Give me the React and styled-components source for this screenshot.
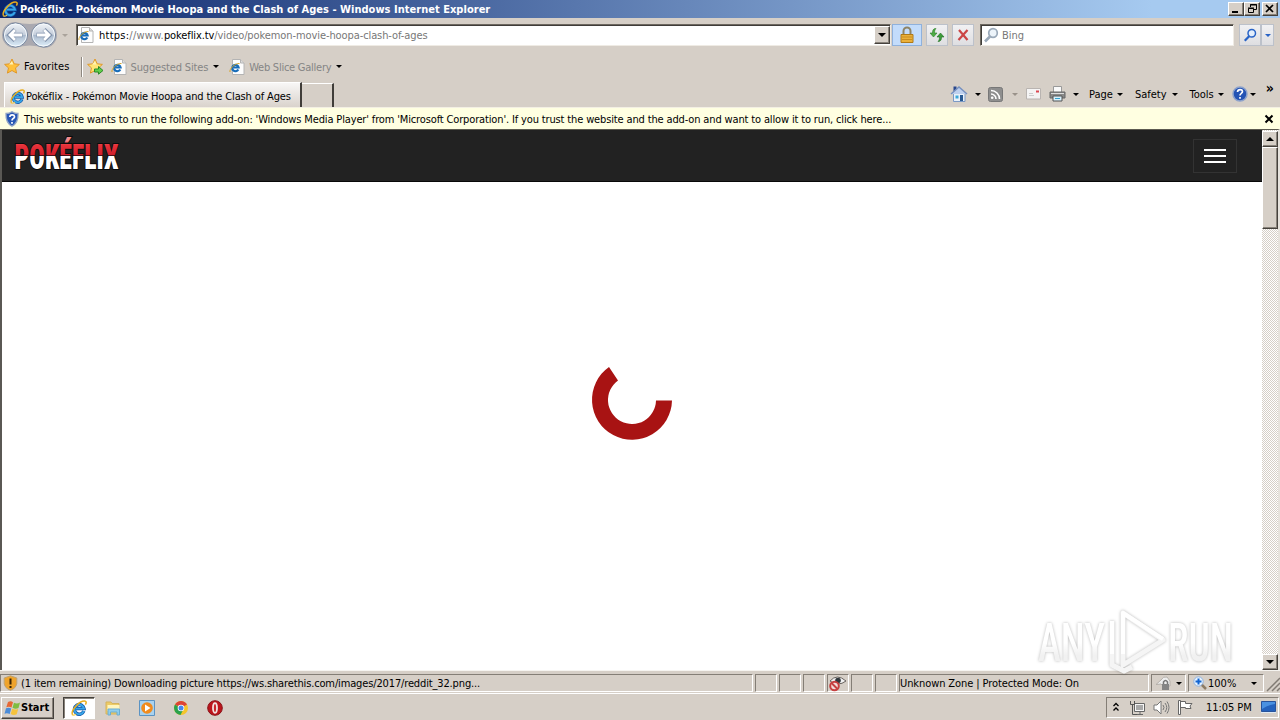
// Global
import { Fragment } from 'react'
import styled, { createGlobalStyle, css } from 'styled-components'

const GlobalStyle = createGlobalStyle`
  * {
    box-sizing: border-box;
  }

  body {
    margin: 0;
    overflow: hidden;
    background: #d6cfc7;
    font-family: 'DejaVu Sans Condensed', 'DejaVu Sans', sans-serif;
    font-stretch: condensed;
    font-size: 11px;
    color: #000;
  }

  svg {
    display: block;
    flex: none;
    overflow: visible;
  }
`

// Classic borders
const sunken = css`
  border: 1px solid;
  border-color: #847e76 #fff #fff #847e76;
`

const raised = css`
  border: 1px solid;
  border-color: #fff #45413c #45413c #fff;
  box-shadow: inset -1px -1px 0 #88827a;
`

const Window = styled.div`
  width: 1280px;
  height: 720px;
  display: flex;
  flex-direction: column;
`

const Text = styled.span`
  flex: none;
  white-space: pre;
  line-height: 14px;
  padding-top: ${p => (p.$flat ? 0 : 2)}px;
  margin-left: ${p => p.$left || 0}px;
  letter-spacing: ${p => p.$spacing || 0}px;
  color: ${p => p.$color || '#000'};
  font-weight: ${p => (p.$bold ? 700 : 400)};
`

const Gap = styled.div`
  flex: ${p => (p.$w ? `0 0 ${p.$w}px` : '1')};
`

const Arrow = styled.i`
  flex: none;
  width: 0;
  height: 0;
  border: 3px solid transparent;
  border-width: 3px 3px 0;
  border-top-color: ${p => p.$color || '#000'};
  margin-left: ${p => p.$left || 0}px;
`

// Title bar
const TitleBar = styled.div`
  height: 18px;
  flex: none;
  display: flex;
  align-items: center;
  padding: 0 2px;
  background: linear-gradient(90deg, #0a246a, #a6caf0 90%);
`

const WindowButton = styled.div`
  width: 16px;
  height: 14px;
  margin-left: ${p => p.$left || 0}px;
  background: #d6cfc7;
  ${raised}
`

// Address row
const AddressRow = styled.div`
  height: 34px;
  flex: none;
  display: flex;
  align-items: center;
  padding-left: 2px;
`

const Field = styled.div`
  width: ${p => p.$w}px;
  height: 22px;
  flex: none;
  display: flex;
  align-items: center;
  background: #fff;
  border: 1px solid;
  border-color: #6d6860 #efebe4 #efebe4 #6d6860;
  box-shadow: inset 1px 1px 0 #403d39;
  margin-left: ${p => p.$left || 0}px;
`

const DropButton = styled.div`
  width: 16px;
  height: 18px;
  display: flex;
  align-items: center;
  justify-content: center;
  background: #d6cfc7;
  ${raised}

  i {
    border-width: 4px 4px 0;
  }
`

const ToolButton = styled.div`
  width: ${p => p.$w || 22}px;
  height: 22px;
  flex: none;
  display: flex;
  align-items: center;
  justify-content: center;
  margin-left: ${p => p.$left || 0}px;
  background: ${p => (p.$active ? '#c3dcfb' : 'linear-gradient(#f1f1f3, #dedee1)')};
  border: 1px solid ${p => (p.$active ? '#8fb1dc' : '#bcc1ca')};
`

// Favorites row
const FavoritesRow = styled.div`
  height: 29px;
  flex: none;
  display: flex;
  align-items: center;
  padding-left: 4px;
`

const Divider = styled.div`
  width: 2px;
  height: 20px;
  margin-left: ${p => p.$left}px;
  background: #8d877f;
  border-right: 1px solid #fff;
`

// Tabs and command bar
const TabRow = styled.div`
  height: 27px;
  flex: none;
  display: flex;
  align-items: flex-end;
  padding-left: 4px;
  border-bottom: 1px solid #f3efe4;
`

const Tab = styled.div`
  width: 298px;
  height: 25px;
  display: flex;
  align-items: center;
  padding: 2px 0 0 5px;
  background: linear-gradient(#f8f7f6, #d9d3cc);
  border: 1px solid #fff;
  border-bottom: 0;
  border-right: 2px solid #403d39;
`

const NewTab = styled.div`
  width: 32px;
  height: 24px;
  border-top: 1px solid #fff;
  border-right: 2px solid #403d39;
`

const CommandBar = styled.div`
  flex: 1;
  height: 26px;
  display: flex;
  align-items: center;
  padding-left: 616px;
`

const Overflow = styled(Text)`
  align-self: flex-start;
  font-size: 14px;
  font-weight: 700;
  line-height: 10px;
`

const InfoBar = styled.div`
  height: 21px;
  flex: none;
  display: flex;
  align-items: center;
  padding: 0 6px 0 4px;
  background: #ffffe1;
`

// Web page
const Viewport = styled.div`
  height: 541px;
  flex: none;
  display: flex;
  border-top: 1px solid #5c5a50;
  border-left: 2px solid #5a5854;
  border-right: 2px solid #e6e2dc;
`

const Page = styled.div`
  width: 1260px;
  display: flex;
  flex-direction: column;
  background: #fff;
`

const Navbar = styled.div`
  height: 52px;
  flex: none;
  display: flex;
  align-items: center;
  justify-content: space-between;
  padding: 0 25px 0 10px;
  background: #222;
  border-bottom: 1px solid #080808;
`

const MenuButton = styled.div`
  width: 44px;
  height: 34px;
  display: flex;
  flex-direction: column;
  align-items: center;
  justify-content: center;
  gap: 4px;
  border: 1px solid #333;

  span {
    width: 22px;
    height: 2px;
    background: #fff;
  }
`

const Loading = styled.div`
  flex: 1;
  display: flex;
  align-items: center;
  justify-content: center;
  padding-bottom: 52px;
`

const Scrollbar = styled.div`
  width: 16px;
  display: flex;
  flex-direction: column;
  padding-top: 1px;
  background: repeating-conic-gradient(#fff 0 25%, #d6cfc7 0 50%) 0 0 / 2px 2px;
`

const ScrollButton = styled.div`
  height: 16px;
  display: flex;
  align-items: center;
  justify-content: center;
  background: #d6cfc7;
  ${raised}

  i {
    border-width: 4px 4px 0;
    transform: ${p => (p.$up ? 'rotate(180deg)' : 'none')};
  }
`

const Thumb = styled.div`
  height: 82px;
  background: #d6cfc7;
  ${raised}
`

const Watermark = styled.svg`
  position: absolute;
  left: 1030px;
  top: 604px;
  filter: drop-shadow(0 0 1.5px rgba(0, 0, 0, 0.28));
`

// Status bar
const StatusBar = styled.div`
  height: 23px;
  flex: none;
  display: flex;
  align-items: center;
  gap: 2px;
  padding-top: 2px;
  border-top: 1px solid #f6f4f0;
`

const Panel = styled.div`
  width: ${p => p.$w || 22}px;
  height: 18px;
  flex: none;
  display: flex;
  align-items: center;
  ${sunken}
`

// Taskbar
const Taskbar = styled.div`
  height: 27px;
  flex: none;
  display: flex;
  align-items: center;
  padding: 1px 1px 0 1px;
  border-top: 1px solid #fff;
`

const StartButton = styled.div`
  width: 53px;
  height: 22px;
  display: flex;
  align-items: center;
  padding-left: 2px;
  ${raised}
`

const ActiveTask = styled.div`
  width: 32px;
  height: 22px;
  display: flex;
  align-items: center;
  justify-content: center;
  margin-left: 9px;
  background: #fff;
  border: 1px solid;
  border-color: #45413c #fff #fff #45413c;
  box-shadow: inset 1px 1px 0 #88827a;
`

const Tray = styled.div`
  width: 173px;
  height: 21px;
  display: flex;
  align-items: center;
  padding-left: 5px;
  ${sunken}
`

// Icons
function IeIcon({ size = 16 }) {
  return (
    <svg width={size} height={size} viewBox="0 0 16 16" fill="none">
      <path d="M12.800 11A4.800 4.800 0 1 1 13 8.600H5" stroke="#1558a8" strokeWidth="3.400" />
      <path d="M12.800 11A4.800 4.800 0 1 1 13 8.600H5" stroke="#37a5e8" strokeWidth="1.900" />
      <path d="M1.500 14.800C-.8 11 8.500.2 14.300 1.200c1.300.3 1 2 .1 3.500" stroke="#e8ad1d" strokeWidth="1.500" />
      <path d="M1.500 14.800c.8.800 2.400.1 3.600-.6" stroke="#f5cd45" strokeWidth="1.200" />
    </svg>
  )
}

function PageIcon() {
  return (
    <svg width="16" height="16" viewBox="0 0 16 16">
      <path d="M3.500.5h8l3.500 3.500v11.500H3.500z" fill="#fdfdfd" stroke="#b4b4b4" />
      <path d="M11.500.5V4H15" fill="#ddd" stroke="#b4b4b4" />
      <path d="M9.300 10.500a3.200 3.200 0 1 1 .3-2H4.500" fill="none" stroke="#176cb9" strokeWidth="2.200" />
      <path d="M1 13C0 10.500 5.500 4 10.500 4.500" fill="none" stroke="#d8a528" />
    </svg>
  )
}

function NavButtons() {
  return (
    <svg width="56" height="28" viewBox="0 0 56 28">
      <defs>
        <linearGradient id="orb" x1="0" y1="0" x2="0" y2="1">
          <stop offset="0" stopColor="#f2f5f9" />
          <stop offset=".48" stopColor="#c5cedb" />
          <stop offset=".5" stopColor="#a8b7cb" />
          <stop offset="1" stopColor="#e0f1fc" />
        </linearGradient>
      </defs>
      <path d="M13 1q15 4 29 0a13 13 0 0 1 0 26q-14-5-29 0a13 13 0 0 1 0-26z" fill="#aaa9b0" />
      {[13.5, 41.5].map((cx, i) => (
        <g key={i}>
          <circle cx={cx} cy="14" r="12" fill="url(#orb)" stroke="#76869e" />
          <circle cx={cx} cy="14" r="11" fill="none" stroke="#f6fafd" />
        </g>
      ))}
      <path d="M20.500 14h-13M13 8.500 7.500 14l5.500 5.500M34.500 14h13M42 8.500l5.500 5.500-5.500 5.500" fill="none" stroke="#8293ac" strokeWidth="4.400" />
      <path d="M20 14H8M13 9l-5 5 5 5M35 14h12M42 9l5 5-5 5" fill="none" stroke="#fff" strokeWidth="2.800" />
    </svg>
  )
}

function StarIcon({ add }) {
  return (
    <svg width="17" height="17" viewBox="0 0 17 17">
      <path d="m8 1 2.200 4.800 5.200.6-3.900 3.500 1.100 5.200L8 12.500l-4.600 2.600 1.100-5.200L.6 6.400l5.200-.6z" fill={add ? '#ffe675' : '#ffc13b'} stroke="#e0982a" />
      <path d="m8 3 1.300 3.500H5z" fill="#fff3b5" />
      {add && <path d="M7.500 11h4V8.500l4.500 4-4.500 3.700V14h-4z" fill="#62cf4a" stroke="#2b8a28" />}
    </svg>
  )
}

function LockIcon() {
  return (
    <svg width="16" height="18" viewBox="0 0 16 18">
      <path d="M4.500 9V5a3.500 3.500 0 0 1 7 0v4" fill="none" stroke="#8e8466" strokeWidth="2" />
      <path d="M2 8.500h12v8H2z" fill="#eab03a" stroke="#b07a18" />
      <path d="M3 11h10M3 13.500h10" stroke="#c98d22" />
    </svg>
  )
}

function RefreshIcon() {
  return (
    <svg width="16" height="16" viewBox="0 0 16 16">
      <path d="M7 1.500c-3 0-3.500 2-3.500 4.500H1l3.500 4L8 6H5.500c0-2 .5-3.500 1.500-4.500z" fill="#4fac45" stroke="#2c7d2c" strokeWidth=".6" />
      <path d="M9 14.500c3 0 3.500-2 3.500-4.500H15l-3.500-4L8 10h2.500c0 2-.5 3.500-1.500 4.500z" fill="#3d9b3a" stroke="#206e24" strokeWidth=".6" />
    </svg>
  )
}

function StopIcon() {
  return (
    <svg width="14" height="14" viewBox="0 0 14 14">
      <path d="m3 2 8.500 10M11.500 2 2.500 12" stroke="#cb4545" strokeWidth="2.200" />
    </svg>
  )
}

function SearchIcon({ color = '#2863c6', glass = '#e3eefc', size = 16 }) {
  return (
    <svg width={size} height={size} viewBox="0 0 16 16">
      <path d="M7 9.500 2 14.500" stroke={color} strokeWidth="2.600" />
      <circle cx="10" cy="6" r="4.300" fill={glass} stroke={color} strokeWidth="1.700" />
    </svg>
  )
}

function ShieldIcon() {
  return (
    <svg width="16" height="16" viewBox="0 0 16 16">
      <path d="M8 .7c2 1.300 4 1.800 6 1.800.3 6-1 10-6 12.800C3 12.500 1.700 8.500 2 2.500 4 2.500 6 2 8 .7z" fill="#2858b5" stroke="#93a6c6" strokeWidth="1.300" />
      <path d="M5.800 6q.2-2.200 2.400-2.200c2.800 0 3 2.800 1 3.800Q8 8.300 8 9.500M8 11v1.700" fill="none" stroke="#fff" strokeWidth="1.700" />
    </svg>
  )
}

function HomeIcon() {
  return (
    <svg width="18" height="18" viewBox="0 0 18 18">
      <path d="M3.500 1.500h3v5h-3z" fill="#28478d" />
      <path d="M3.500 8h11.500v8.500H3.500z" fill="#e9f1fa" stroke="#7b99c5" />
      <path d="M1 9 9 2l8 7" fill="#bed0ee" stroke="#7690bf" strokeWidth="1.500" />
      <path d="M10 10h3v6h-3z" fill="#285993" />
      <path d="M5.500 10.500h3v3h-3z" fill="#3ca8d9" />
    </svg>
  )
}

function FeedIcon() {
  return (
    <svg width="15" height="15" viewBox="0 0 15 15">
      <rect x=".5" y=".5" width="14" height="14" rx="2" fill="#8e8e8e" stroke="#777" />
      <path d="M3 3.500a8.500 8.500 0 0 1 8.500 8.500M3 7a5 5 0 0 1 5 5" fill="none" stroke="#fff" strokeWidth="1.600" />
      <circle cx="4.200" cy="10.800" r="1.300" fill="#fff" />
    </svg>
  )
}

function MailIcon() {
  return (
    <svg width="15" height="12" viewBox="0 0 15 12">
      <path d="M.5.500h14v10.500H.5z" fill="#f5f4f4" stroke="#b9b4b1" />
      <path d="M10 2.500h3v2h-3z" fill="#db4651" />
      <path d="M3 5.500h4M3 7.500h5" stroke="#ccc" />
    </svg>
  )
}

function PrinterIcon() {
  return (
    <svg width="17" height="16" viewBox="0 0 17 16">
      <path d="M4.500.5h8V7h-8z" fill="#fafafa" stroke="#999" />
      <path d="M1 6h15v6H1z" fill="#888" stroke="#666" />
      <path d="M2 7.500h13" stroke="#ddd" />
      <path d="M4 10h9v5H4z" fill="#d8f0fb" stroke="#555" />
      <path d="M6 12.500h5" stroke="#36a0cc" />
    </svg>
  )
}

function HelpIcon() {
  return (
    <svg width="16" height="16" viewBox="0 0 16 16">
      <circle cx="8" cy="8" r="7" fill="#2453b4" stroke="#8da2cb" strokeWidth="1.500" />
      <path d="M5.500 6q.2-2.300 2.600-2.300c3 0 3 2.800 1 3.900Q8 8.300 8 9.500M8 11v1.800" fill="none" stroke="#fff" strokeWidth="1.700" />
    </svg>
  )
}

function Logo() {
  return (
    <svg width="112" height="51" viewBox="0 0 112 51">
      <defs>
        <linearGradient id="logo" gradientUnits="userSpaceOnUse" x1="0" y1="0" x2="0" y2="50">
          <stop offset=".2" stopColor="#f08a8c" />
          <stop offset=".3" stopColor="#e8323a" />
          <stop offset=".5" stopColor="#cf202c" />
          <stop offset=".5" stopColor="#4d1115" />
          <stop offset=".52" stopColor="#4d1115" />
          <stop offset=".52" stopColor="#fff" />
        </linearGradient>
      </defs>
      <text x="2.500" y="38.500" textLength="104" lengthAdjust="spacingAndGlyphs" fontFamily="Roboto, sans-serif" fontWeight="900" fontSize="35" fill="url(#logo)" stroke="#0b0b0b" strokeWidth="2" paintOrder="stroke">POKÉFLIX</text>
    </svg>
  )
}

function Spinner() {
  return (
    <svg width="80" height="80" viewBox="-40 -40 80 80">
      <path d="M40 .5A40 40 0 1 1-23-33l9 13.500A24 24 0 1 0 24 .5z" fill="#a81313" />
    </svg>
  )
}

function WarnIcon() {
  return (
    <svg width="15" height="16" viewBox="0 0 15 16">
      <path d="M7.500.8 13.800 3v5.500q-1 5-6.300 6.700Q2 13.500 1.200 8.500V3z" fill="#efa42b" stroke="#bca275" />
      <path d="M7.500 3.500v6M7.500 11v2" stroke="#3b2505" strokeWidth="2" />
    </svg>
  )
}

function PrivacyIcon() {
  return (
    <svg width="20" height="17" viewBox="0 0 20 17">
      <path d="M2 6q7-8 16 0-8 6-16 0z" fill="#f2f2f2" stroke="#68625e" />
      <circle cx="10" cy="5.500" r="2.800" fill="#30383d" />
      <circle cx="6.500" cy="11" r="4.300" fill="#f2dcda" stroke="#c64040" strokeWidth="2" />
      <path d="m3.500 8 6 6" stroke="#c64040" strokeWidth="2" />
    </svg>
  )
}

function ProtectIcon() {
  return (
    <svg width="17" height="16" viewBox="0 0 17 16">
      <path d="M1 9.500 6 5q2-4 6-3l3 4v5H8L6 9z" fill="#eee" stroke="#b5b0aa" />
      <path d="M8.500 9V7q2-3 4 0v2" fill="none" stroke="#777" strokeWidth="1.500" />
      <path d="M7 9h7v6H7z" fill="#858585" />
    </svg>
  )
}

function ZoomIcon() {
  return (
    <svg width="14" height="15" viewBox="0 0 14 15">
      <path d="m8 8 5 5" stroke="#8e7c65" strokeWidth="2.500" />
      <circle cx="5.500" cy="5.500" r="4.700" fill="#e5f2ff" stroke="#91b3df" />
      <path d="M5.500 2.500v6M2.500 5.500h6" stroke="#1264d1" strokeWidth="2" />
    </svg>
  )
}

function WindowsIcon() {
  return (
    <svg width="17" height="16" viewBox="0 0 17 16">
      <path d="M4 2q3-1.500 5 .3L7.500 7.500Q5 6 2.300 7.200z" fill="#e66835" />
      <path d="M10 2.700q3 1.500 6-.2L14.500 8q-3 1.500-6-.2z" fill="#7fbd42" />
      <path d="M2 8.200q3-1.200 5.200.3L5.700 14Q3 12.500.5 13.700z" fill="#4b8cd8" />
      <path d="M8.200 8.800q3 1.500 6 .2l-1.500 5.300q-3 1.500-6-.2z" fill="#f5c33c" />
    </svg>
  )
}

function FolderIcon() {
  return (
    <svg width="16" height="16" viewBox="0 0 16 16">
      <path d="M1 2h5l1 1.500h7V14H1z" fill="#edcb66" stroke="#d5b35c" />
      <path d="M2.500 5h12v6h-12z" fill="#fff5bd" />
      <path d="M3 9h11.500v6H12v-3H5.500v3H3z" fill="#8fcdec" stroke="#6cadd1" />
    </svg>
  )
}

function PlayerIcon() {
  return (
    <svg width="16" height="16" viewBox="0 0 16 16">
      <path d="M.5.500h15v15H.5z" fill="#a9d2ef" stroke="#5b93c3" />
      <circle cx="8" cy="8" r="5.800" fill="#f18b1d" />
      <path d="m6 4.500 5.500 3.500L6 11.500z" fill="#fff" />
    </svg>
  )
}

function ChromeIcon() {
  return (
    <svg width="14" height="14" viewBox="0 0 14 14">
      <circle cx="7" cy="7" r="7" fill="#f4c52c" />
      <path d="M7 7 1 3.500a7 7 0 0 1 12 0z" fill="#dc4437" />
      <path d="M1 3.500a7 7 0 0 0 5.500 10.500L9 9z" fill="#2ba24c" />
      <circle cx="7" cy="7" r="3.300" fill="#fff" />
      <circle cx="7" cy="7" r="2.500" fill="#4587ee" />
    </svg>
  )
}

function OperaIcon() {
  return (
    <svg width="16" height="16" viewBox="0 0 16 16">
      <circle cx="8" cy="8" r="7.300" fill="#bc151c" stroke="#8a1218" />
      <ellipse cx="8" cy="8" rx="2" ry="4.800" fill="#c9262b" stroke="#f3e4e2" strokeWidth="1.800" />
    </svg>
  )
}

function NetworkIcon() {
  return (
    <svg width="17" height="16" viewBox="0 0 17 16" stroke="#666" fill="#f6f6f6">
      <path d="M5.500 3.500h10v8h-10zM8 14.500h6M11 12v2" />
      <path d="M7 5h7v5H7z" fill="#a9a9a9" stroke="none" />
      <path d="M1.500 1v3.500h4V1M3.500 5v9.500H8" fill="none" stroke="#555" />
    </svg>
  )
}

function SpeakerIcon() {
  return (
    <svg width="17" height="15" viewBox="0 0 17 15" fill="none" stroke="#777">
      <path d="M1 5h3l4-4v13l-4-4H1z" fill="#fff" />
      <path d="M10 5q2 2.500 0 5M12 3q3.500 4.500 0 9M14 1.500q4 6 0 12" />
    </svg>
  )
}

function FlagIcon() {
  return (
    <svg width="17" height="15" viewBox="0 0 17 15" stroke="#666" fill="#fff">
      <path d="M1.500.5h2v14h-2zM3.500 1.500h5v2h6.500l-2 2.500 1 2.500H8.500v-1h-5z" />
    </svg>
  )
}

function DesktopIcon() {
  return (
    <svg width="15" height="13" viewBox="0 0 15 13">
      <path d="M.5.500h14v10H.5z" fill="#2462bd" stroke="#28539b" />
      <path d="M1 1h13v2Q7 4 1 8z" fill="#4a91e1" />
      <path d="M0 11.500h15" stroke="#dfe9f2" />
    </svg>
  )
}

const commands = [
  { name: 'Page', left: 10, arrow: 4 },
  { name: 'Safety', left: 12, arrow: 5 },
  { name: 'Tools', left: 12, arrow: 4 },
]

export default function App() {
  return (
    <Window>
      <GlobalStyle />

      <TitleBar>
        <IeIcon />
        <Text $left={2} $spacing={0.025} $color="#fff" $bold>Pokéflix - Pokémon Movie Hoopa and the Clash of Ages - Windows Internet Explorer</Text>
        <Gap />
        <WindowButton>
          <svg width="14" height="12"><path d="M3 9h6" stroke="#000" strokeWidth="2" /></svg>
        </WindowButton>
        <WindowButton>
          <svg width="14" height="12" fill="none" stroke="#000"><path d="M5.500 4V1.500h6v5H9M5 2h7M3.500 5.500h5v4h-5zM3 5h6" /></svg>
        </WindowButton>
        <WindowButton $left={2}>
          <svg width="14" height="12"><path d="m3 2 7 7M10 2 3 9" stroke="#000" strokeWidth="1.700" /></svg>
        </WindowButton>
      </TitleBar>

      <AddressRow>
        <NavButtons />
        <Arrow $left={4} $color="#aaa39b" />
        <Field $w={815} $left={8}>
          <Gap $w={1} />
          <PageIcon />
          <Text $left={5} $spacing={0.25}>https:</Text>
          <Text $spacing={0.25} $color="#777">//www.</Text>
          <Text $spacing={-0.1}>pokeflix.tv</Text>
          <Text $spacing={-0.09} $color="#777">/video/pokemon-movie-hoopa-clash-of-ages</Text>
          <Gap />
          <DropButton><Arrow /></DropButton>
        </Field>
        <ToolButton $w={30} $left={1} $active><LockIcon /></ToolButton>
        <ToolButton $left={4}><RefreshIcon /></ToolButton>
        <ToolButton $left={4}><StopIcon /></ToolButton>
        <Field $w={254} $left={6}>
          <Gap $w={2} />
          <SearchIcon color="#9aa9b9" glass="#edf4fa" />
          <Text $left={3} $color="#777">Bing</Text>
        </Field>
        <ToolButton $left={5}><SearchIcon size={14} /></ToolButton>
        <ToolButton $w={13}><Arrow $color="#2863c6" /></ToolButton>
      </AddressRow>

      <FavoritesRow>
        <StarIcon />
        <Text $left={3} $spacing={0.1} $flat>Favorites</Text>
        <Divider $left={11} />
        <Gap $w={4} />
        <StarIcon add />
        <Gap $w={7} />
        <PageIcon />
        <Text $left={4} $spacing={-0.15} $color="#858585">Suggested Sites</Text>
        <Arrow $left={5} />
        <Gap $w={10} />
        <PageIcon />
        <Text $left={4} $spacing={-0.25} $color="#858585">Web Slice Gallery</Text>
        <Arrow $left={5} />
      </FavoritesRow>

      <TabRow>
        <Tab>
          <IeIcon size={15} />
          <Text $left={1} $spacing={-0.135}>Pokéflix - Pokémon Movie Hoopa and the Clash of Ages</Text>
        </Tab>
        <NewTab />
        <CommandBar>
          <HomeIcon />
          <Arrow $left={7} />
          <Gap $w={7} />
          <FeedIcon />
          <Arrow $left={9} $color="#99928a" />
          <Gap $w={8} />
          <MailIcon />
          <Gap $w={8} />
          <PrinterIcon />
          <Arrow $left={7} />
          {commands.map(item => (
            <Fragment key={item.name}>
              <Text $left={item.left}>{item.name}</Text>
              <Arrow $left={item.arrow} />
            </Fragment>
          ))}
          <Gap $w={8} />
          <HelpIcon />
          <Arrow $left={2} />
          <Overflow $left={10}>»</Overflow>
        </CommandBar>
      </TabRow>

      <InfoBar>
        <ShieldIcon />
        <Text $left={4} $spacing={-0.144}>This website wants to run the following add-on: 'Windows Media Player' from 'Microsoft Corporation'. If you trust the website and the add-on and want to allow it to run, click here...</Text>
        <Gap />
        <svg width="10" height="10"><path d="m1.500 1.500 7 7M8.500 1.500l-7 7" stroke="#000" strokeWidth="2" /></svg>
      </InfoBar>

      <Viewport>
        <Page>
          <Navbar>
            <Logo />
            <MenuButton><span /><span /><span /></MenuButton>
          </Navbar>
          <Loading><Spinner /></Loading>
        </Page>
        <Scrollbar>
          <ScrollButton $up><Arrow /></ScrollButton>
          <Thumb />
          <Gap />
          <ScrollButton><Arrow /></ScrollButton>
        </Scrollbar>
      </Viewport>

      <StatusBar>
        <Panel $w={753}>
          <Gap $w={2} />
          <WarnIcon />
          <Text $left={3} $spacing={-0.14}>(1 item remaining) Downloading picture https://ws.sharethis.com/images/2017/reddit_32.png...</Text>
        </Panel>
        <Panel />
        <Panel />
        <Panel />
        <Panel><PrivacyIcon /></Panel>
        <Panel />
        <Panel />
        <Panel $w={250}><Text $spacing={-0.09}>Unknown Zone | Protected Mode: On</Text></Panel>
        <Panel $w={35}>
          <Gap $w={3} />
          <ProtectIcon />
          <Arrow $left={4} />
        </Panel>
        <Panel $w={76}>
          <Gap $w={4} />
          <ZoomIcon />
          <Text $left={1}>100%</Text>
          <Arrow $left={15} />
        </Panel>
        <svg width="14" height="16"><path d="M1 16 14 3M6 16l8-8M11 16l3-3" stroke="#817b74" strokeWidth="1.500" /></svg>
      </StatusBar>

      <Taskbar>
        <StartButton>
          <WindowsIcon />
          <Text $bold $flat>Start</Text>
        </StartButton>
        <ActiveTask><IeIcon /></ActiveTask>
        <Gap $w={10} />
        <FolderIcon />
        <Gap $w={18} />
        <PlayerIcon />
        <Gap $w={19} />
        <ChromeIcon />
        <Gap $w={19} />
        <OperaIcon />
        <Gap />
        <Tray>
          <svg width="9" height="12" fill="none" stroke="#000" strokeWidth="1.300"><path d="m1.500 4 2.500-2.500L6.500 4M1.500 8.500 4 6l2.500 2.500" /></svg>
          <Gap $w={8} />
          <NetworkIcon />
          <Gap $w={7} />
          <SpeakerIcon />
          <Gap $w={7} />
          <FlagIcon />
          <Text $left={12} $spacing={-0.05} $flat>11:05 PM</Text>
          <Gap />
          <DesktopIcon />
          <Gap $w={2} />
        </Tray>
      </Taskbar>

      <Watermark width="220" height="76" viewBox="0 0 220 76">
        <defs>
          <linearGradient id="fade" x1="0" y1="0" x2="0" y2="1">
            <stop offset=".5" stopColor="#fff" />
            <stop offset=".7" stopColor="#f1f1f1" />
          </linearGradient>
        </defs>
        <g fill="url(#fade)" fontFamily="Roboto, sans-serif" fontSize="53" fontWeight="500">
          <text x="8" y="57" textLength="67" lengthAdjust="spacingAndGlyphs">ANY</text>
          <text x="138" y="57" textLength="65" lengthAdjust="spacingAndGlyphs">RUN</text>
        </g>
        <g fill="none" strokeLinejoin="round">
          <path d="M93 9v52l40-25zM82 17v44l12 6 8-4" stroke="#f5f5f5" strokeWidth="5" />
          <path d="M93 50V9l40 26M82 50V17" stroke="#fff" strokeWidth="4" />
        </g>
      </Watermark>
    </Window>
  )
}
